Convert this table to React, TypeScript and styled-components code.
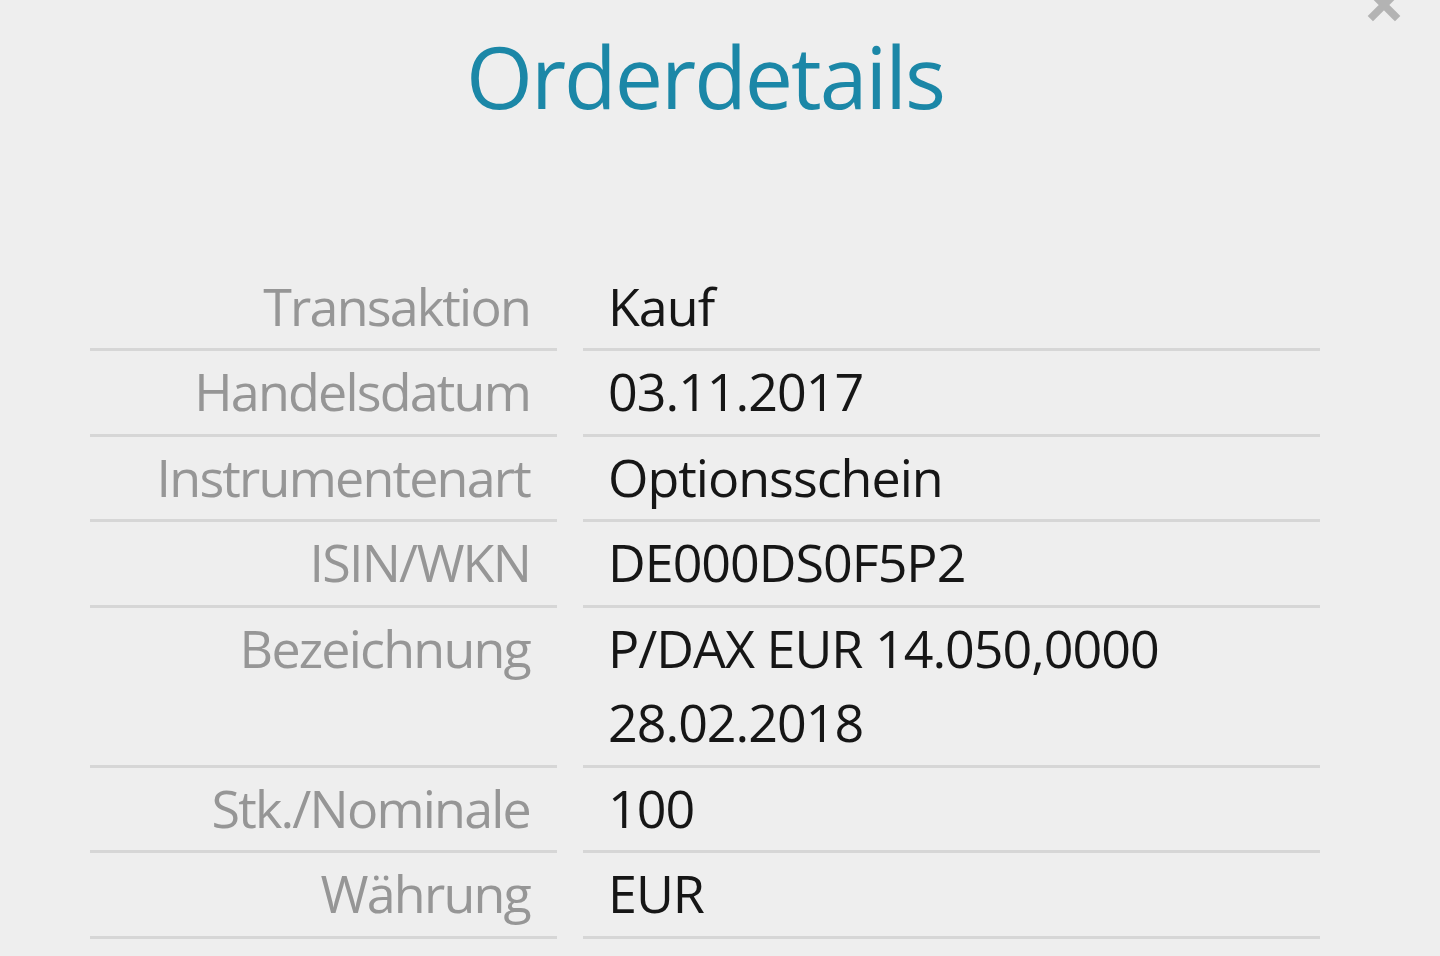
import React from 'react';
import styled, {createGlobalStyle} from "styled-components";

type DetailRow = {
    label: string
    value: Array<string>
}

const rows: Array<DetailRow> = [
    {label: 'Transaktion', value: ['Kauf']},
    {label: 'Handelsdatum', value: ['03.11.2017']},
    {label: 'Instrumentenart', value: ['Optionsschein']},
    {label: 'ISIN/WKN', value: ['DE000DS0F5P2']},
    {label: 'Bezeichnung', value: ['P/DAX EUR 14.050,0000', '28.02.2018']},
    {label: 'Stk./Nominale', value: ['100']},
    {label: 'Währung', value: ['EUR']},
]

const GlobalStyle = createGlobalStyle`
    html, body {
        margin: 0;
        padding: 0;
        background-color: #eeeeee;
        overflow: hidden;
    }
    body {
        font-family: "Open Sans", "Noto Sans", sans-serif;
    }
`

export default function App() {
    return (
        <>
            <GlobalStyle/>
            <StyledPage>
                <CloseButton aria-label="Schließen">
                    <svg width="34" height="34" viewBox="0 0 34 34">
                        <path d="M6 6 L28 28 M28 6 L6 28" stroke="#b3b3b3" strokeWidth="7.5" strokeLinecap="square"/>
                    </svg>
                </CloseButton>
                <Title>Orderdetails</Title>
                <Table>
                    {rows.map((row, index) => (
                        <Row key={index}>
                            <Label>{row.label}</Label>
                            <Value>
                                {row.value.map((line, i) => <div key={i}>{line}</div>)}
                            </Value>
                        </Row>
                    ))}
                </Table>
            </StyledPage>
        </>
    );
}

const StyledPage = styled.div`
    position: relative;
    width: 1410px;
    height: 956px;
    display: flex;
    flex-direction: column;
    align-items: center;
`

const CloseButton = styled.button`
    position: absolute;
    top: -12px;
    right: 9px;
    padding: 0;
    border: none;
    background: none;
`

const Title = styled.h1`
    margin: 26px 0 0;
    font-size: 86px;
    font-weight: 400;
    line-height: 100px;
    letter-spacing: -2px;
    color: #1b87a7;
`

const Table = styled.div`
    margin-top: 139.5px;
    width: 1230px;
    display: flex;
    flex-direction: column;
`

const Row = styled.div`
    display: grid;
    grid-template-columns: 467px 737px;
    column-gap: 26px;
`

const Cell = styled.div`
    border-bottom: 3px solid #d6d6d6;
    font-size: 52px;
    line-height: 74.5px;
    padding: 3px 0 5px;
`

const Label = styled(Cell)`
    text-align: right;
    padding-right: 27px;
    letter-spacing: -1.8px;
    color: #969696;
`

const Value = styled(Cell)`
    padding-left: 25px;
    letter-spacing: -1px;
    color: #161616;
`
